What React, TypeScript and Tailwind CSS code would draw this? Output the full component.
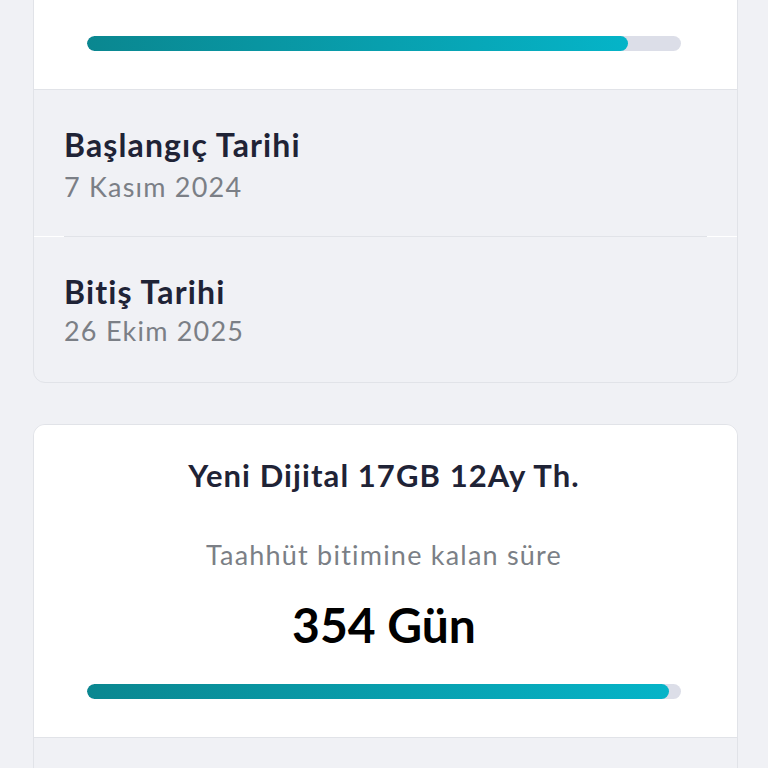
export default function App() {
  return (
    <main
      className="min-h-screen bg-[#f0f1f5] pl-[33px] pr-[30px] overflow-hidden"
      style={{ fontFamily: 'Lato, "Noto Sans", sans-serif' }}
    >
      {/* top card, scrolled partly out of view */}
      <div className="-mt-[20px] rounded-xl border border-[#e1e3e8] bg-[#f0f1f5] overflow-hidden">
        <div className="bg-white pt-[55px] pb-[38px] pl-[53px] pr-[56px] border-b border-[#e1e3e8]">
          <ProgressBar percent={91} />
        </div>
        <div className="px-[30px] pt-[36px] pb-[33px]">
          <h3 className="text-[32px] leading-[38px] font-bold tracking-[0.035em] text-[#1f2336]">Başlangıç Tarihi</h3>
          <p className="mt-[7px] text-[27px] leading-[32px] tracking-[0.045em] text-[#7b7f86]">7 Kasım 2024</p>
        </div>
        <div className="h-px bg-white">
          <div className="mx-[30px] h-px bg-[#e1e3e8]" />
        </div>
        <div className="px-[30px] pt-[36px] pb-[35px]">
          <h3 className="text-[32px] leading-[38px] font-bold tracking-[0.035em] text-[#1f2336]">Bitiş Tarihi</h3>
          <p className="mt-[4px] text-[27px] leading-[32px] tracking-[0.045em] text-[#7b7f86]">26 Ekim 2025</p>
        </div>
      </div>

      <div className="mt-[41px] rounded-xl border border-[#e1e3e8] bg-[#f0f1f5] overflow-hidden">
        <div className="bg-white pt-[31px] pb-[38px] pl-[53px] pr-[56px] border-b border-[#e1e3e8] text-center">
          <h2 className="text-[31px] leading-[38px] font-bold tracking-[0.035em] text-[#1f2336]">Yeni Dijital 17GB 12Ay Th.</h2>
          <p className="mt-[45px] text-[27px] leading-[32px] tracking-[0.045em] text-[#7b7f86]">Taahhüt bitimine kalan süre</p>
          <p className="mt-[26px] text-[48px] leading-[56px] font-bold text-black">354 Gün</p>
          <div className="mt-[31px]">
            <ProgressBar percent={98} />
          </div>
        </div>
        <div className="h-[60px]" />
      </div>
    </main>
  )
}

function ProgressBar({ percent }: { percent: number }) {
  return (
    <div className="h-[15px] w-full rounded-full bg-[#dcdee8] overflow-hidden">
      <div
        className="h-full rounded-full bg-gradient-to-r from-[#0a8790] to-[#05b4c8]"
        style={{ width: `${percent}%` }}
      />
    </div>
  )
}
